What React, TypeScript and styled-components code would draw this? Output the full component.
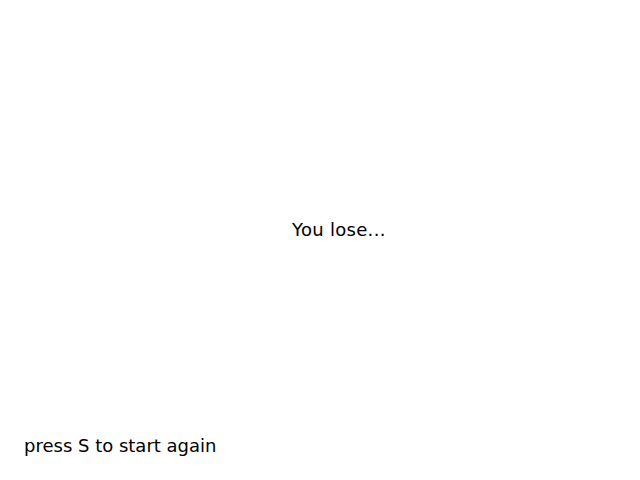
import styled, { createGlobalStyle } from 'styled-components';

const GlobalStyle = createGlobalStyle`
    html, body {
        margin: 0;
        padding: 0;
        background: #fff;
    }
`;

const Screen = styled.div`
    width: 640px;
    height: 480px;
    display: flex;
    flex-direction: column;
    font-family: 'DejaVu Sans', sans-serif;
    font-size: 18px;
    line-height: 21px;
    color: #000;
`;

const Message = styled.p`
    margin: 219px 0 0 292px;
    letter-spacing: 0.3px;
`;

const Hint = styled.p`
    margin: auto 0 24px 24px;
`;

const App = () => (
    <>
        <GlobalStyle />
        <Screen>
            <Message>You lose...</Message>
            <Hint>press S to start again</Hint>
        </Screen>
    </>
);

export default App;
